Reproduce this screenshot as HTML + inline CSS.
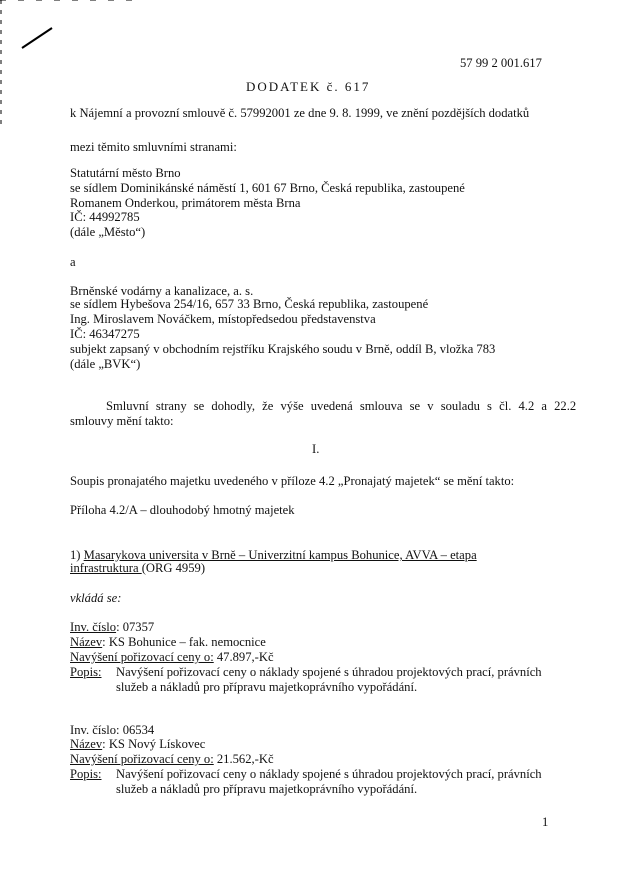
<!DOCTYPE html>
<html><head><meta charset="utf-8"><style>
body{margin:0;background:#fff;}
#p{position:relative;width:620px;height:877px;overflow:hidden;background:#fff;font-family:"Liberation Serif",serif;font-size:12.6px;color:#111;}
.l{position:absolute;left:70px;white-space:nowrap;line-height:14px;}
u{text-decoration:underline;text-underline-offset:1px;}
</style></head><body><div id="p">
<svg width="620" height="877" style="position:absolute;left:0;top:0">
<line x1="22" y1="48" x2="52" y2="28" stroke="#000" stroke-width="2"/>
<line x1="1" y1="0" x2="1" y2="130" stroke="#000" stroke-width="1" stroke-dasharray="4,6"/>
<line x1="0" y1="0" x2="140" y2="0" stroke="#000" stroke-width="1" stroke-dasharray="6,12"/>
</svg>
<div class="l" style="left:460px;top:56px">57 99 2 001.617</div>
<div class="l" style="left:246px;top:80px;font-size:13px;letter-spacing:2px">DODATEK  č. 617</div>
<div class="l" style="top:106px">k  Nájemní a provozní smlouvě č. 57992001 ze dne 9. 8. 1999,  ve znění pozdějších dodatků</div>
<div class="l" style="top:140px">mezi těmito smluvními stranami:</div>
<div class="l" style="top:166px">Statutární město Brno</div>
<div class="l" style="top:181px">se sídlem Dominikánské náměstí 1, 601 67  Brno, Česká republika, zastoupené</div>
<div class="l" style="top:196px">Romanem Onderkou, primátorem města Brna</div>
<div class="l" style="top:210px">IČ: 44992785</div>
<div class="l" style="top:225px">(dále „Město“)</div>
<div class="l" style="top:255px">a</div>
<div class="l" style="top:284px">Brněnské vodárny a kanalizace, a. s.</div>
<div class="l" style="top:297px">se sídlem Hybešova 254/16, 657 33  Brno, Česká republika, zastoupené</div>
<div class="l" style="top:312px">Ing. Miroslavem Nováčkem, místopředsedou představenstva</div>
<div class="l" style="top:327px">IČ: 46347275</div>
<div class="l" style="top:342px">subjekt zapsaný v obchodním rejstříku Krajského soudu v Brně, oddíl B, vložka 783</div>
<div class="l" style="top:357px">(dále „BVK“)</div>
<div class="l" style="left:106px;top:399px;word-spacing:4px">Smluvní strany se dohodly, že výše uvedená smlouva se v souladu s čl. 4.2 a 22.2</div>
<div class="l" style="top:414px">smlouvy mění  takto:</div>
<div class="l" style="left:312px;top:442px">I.</div>
<div class="l" style="top:474px">Soupis pronajatého majetku uvedeného v příloze 4.2 „Pronajatý majetek“ se mění takto:</div>
<div class="l" style="top:503px">Příloha 4.2/A – dlouhodobý hmotný majetek</div>
<div class="l" style="top:548px">1)  <u>Masarykova universita v Brně – Univerzitní kampus Bohunice, AVVA – etapa</u></div>
<div class="l" style="top:561px"><u>infrastruktura </u>(ORG 4959)</div>
<div class="l" style="top:591px;font-style:italic">vkládá se:</div>
<div class="l" style="top:620px"><u>Inv. číslo</u>: 07357</div>
<div class="l" style="top:635px"><u>Název</u>: KS Bohunice – fak. nemocnice</div>
<div class="l" style="top:650px"><u>Navýšení pořizovací ceny o:</u>   47.897,-Kč</div>
<div class="l" style="top:665px"><u>Popis:</u></div>
<div class="l" style="left:116px;top:665px">Navýšení pořizovací ceny o náklady spojené s úhradou projektových prací, právních</div>
<div class="l" style="left:116px;top:680px">služeb a nákladů pro přípravu majetkoprávního vypořádání.</div>
<div class="l" style="top:723px">Inv. číslo:  06534</div>
<div class="l" style="top:737px"><u>Název</u>: KS Nový Lískovec</div>
<div class="l" style="top:752px"><u>Navýšení pořizovací ceny o:</u>   21.562,-Kč</div>
<div class="l" style="top:767px"><u>Popis:</u></div>
<div class="l" style="left:116px;top:767px">Navýšení pořizovací ceny o náklady spojené s úhradou projektových prací, právních</div>
<div class="l" style="left:116px;top:782px">služeb a nákladů pro přípravu majetkoprávního vypořádání.</div>
<div class="l" style="left:542px;top:815px">1</div>
</div></body></html>
